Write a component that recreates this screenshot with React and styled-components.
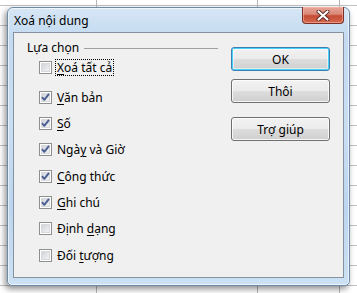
import React from 'react'
import styled, { createGlobalStyle } from 'styled-components'

const GlobalStyle = createGlobalStyle`
  html, body {
    margin: 0;
    padding: 0;
  }
  body {
    width: 357px;
    height: 293px;
    overflow: hidden;
    font-family: 'Noto Sans', 'Open Sans', sans-serif;
    background-color: #ffffff;
    background-image:
      linear-gradient(to right, transparent 96px, #b8b8b8 96px, #b8b8b8 97px, transparent 97px),
      linear-gradient(to right, transparent 257px, #b8b8b8 257px, #b8b8b8 258px, transparent 258px),
      linear-gradient(to right, transparent 339px, #b8b8b8 339px, #b8b8b8 340px, transparent 340px),
      repeating-linear-gradient(to bottom, transparent 0, transparent 5px, #c2c2c2 5px, #c2c2c2 6px, transparent 6px, transparent 20px);
  }
`

const Desktop = styled.div`
  padding: 7px 7px 7px 7px;
`

const Window = styled.div`
  width: 343px;
  height: 279px;
  box-sizing: border-box;
  border: 1px solid #6e8aa4;
  border-radius: 6px 6px 5px 5px;
  background: linear-gradient(
    to bottom,
    #d6e6f5 0px,
    #c3daf0 30px,
    #c9def3 120px,
    #bcd5ee 200px,
    #cde1f4 279px
  );
  box-shadow: -2px 3px 6px rgba(0, 0, 0, 0.45), inset 0 0 0 1px rgba(255, 255, 255, 0.6);
  display: flex;
  flex-direction: column;
  padding: 0 5px 7px 5px;
`

const TitleBar = styled.div`
  height: 24px;
  display: flex;
  align-items: flex-start;
  justify-content: space-between;
`

const Title = styled.div`
  font-size: 12px;
  line-height: 16px;
  color: #000;
  padding: 5px 0 0 1px;
`

const CloseButton = styled.div`
  width: 42px;
  height: 17px;
  margin-top: -1px;
  margin-right: 0px;
  box-sizing: border-box;
  border: 1px solid #7a3027;
  border-top: none;
  border-radius: 0 0 4px 4px;
  background: linear-gradient(to bottom, #e7a698 0%, #d98878 45%, #c44b35 55%, #d56a50 100%);
  box-shadow: inset 0 0 0 1px rgba(255, 190, 170, 0.55);
  display: flex;
  align-items: center;
  justify-content: center;
`

const Client = styled.div`
  flex: 1;
  background: #f0f0f0;
  border: 1px solid #8592a0;
  display: flex;
  padding: 8px 0 0 13px;
`

const Group = styled.div`
  width: 191px;
  display: flex;
  flex-direction: column;
`

const Legend = styled.div`
  display: flex;
  align-items: center;
  font-size: 12px;
  line-height: 14px;
  color: #000;
  margin-bottom: -1px;

  &::after {
    content: '';
    flex: 1;
    height: 1px;
    background: #a0a0a0;
    margin-left: 5px;
    margin-top: 1px;
  }
`

const Row = styled.div`
  height: ${p => (p.first ? '26px' : '26.33px')};
  margin-bottom: ${p => (p.first ? '4px' : '0')};
  display: flex;
  align-items: center;
  padding-left: 12px;
  font-size: 12px;
  color: #000;
`

const Box = styled.div`
  width: 13px;
  height: 13px;
  box-sizing: border-box;
  border: 1px solid #8e8f8f;
  background: #fff;
  padding: 1px;
  margin-right: 5px;
  flex-shrink: 0;
  position: relative;
`

const BoxInner = styled.div`
  width: 9px;
  height: 9px;
  background: linear-gradient(135deg, #cbcfd5 0%, #e3e5e8 55%, #f6f6f6 100%);
  box-shadow: inset 0 0 0 1px #d7d9dd;
`

const Check = styled.svg`
  position: absolute;
  left: 0;
  top: 0;
`

const Label = styled.span`
  line-height: 15px;
  padding: 0 1px;
  border: 1px dotted ${p => (p.focused ? '#000' : 'transparent')};
  margin-left: -2px;
`

const Key = styled.span`
  text-decoration: underline;
  text-underline-offset: 2px;
`

const Buttons = styled.div`
  display: flex;
  flex-direction: column;
  margin-left: 13px;
  padding-top: 6px;
`

const Button = styled.div`
  width: 99px;
  height: 24px;
  box-sizing: border-box;
  border: 1px solid ${p => (p.primary ? '#3c7fb1' : '#707070')};
  border-radius: 3px;
  margin-bottom: ${p => p.gap}px;
  background: linear-gradient(to bottom, #f2f2f2 0%, #ebebeb 48%, #dddddd 52%, #cfcfcf 100%);
  box-shadow: ${p =>
    p.primary
      ? 'inset 0 0 0 1px #48d2fb, inset 0 0 0 2px rgba(255,255,255,0.5)'
      : 'inset 0 0 0 1px rgba(255,255,255,0.8)'};
  display: flex;
  align-items: center;
  justify-content: center;
  font-size: 12px;
  color: #000;
`

const items = [
  { pre: '', key: 'X', post: 'oá tất cả', checked: false, focused: true, first: true },
  { pre: '', key: 'V', post: 'ăn bản', checked: true },
  { pre: '', key: 'S', post: 'ố', checked: true },
  { pre: 'Ngà', key: 'y', post: ' và Giờ', checked: true },
  { pre: '', key: 'C', post: 'ông thức', checked: true },
  { pre: '', key: 'G', post: 'hi chú', checked: true },
  { pre: 'Định ', key: 'd', post: 'ạng', checked: false },
  { pre: 'Đối ', key: 't', post: 'ượng', checked: false },
]

function CheckBox({ checked }) {
  return (
    <Box>
      <BoxInner />
      {checked && (
        <Check width="11" height="11" viewBox="0 0 11 11">
          <path
            d="M2 5.2 L4.3 7.8 L9 1.8"
            fill="none"
            stroke="#4a5e92"
            strokeWidth="1.9"
            strokeLinejoin="round"
          />
        </Check>
      )}
    </Box>
  )
}

export default function App() {
  return (
    <>
      <GlobalStyle />
      <Desktop>
        <Window>
          <TitleBar>
            <Title>Xoá nội dung</Title>
            <CloseButton>
              <svg width="14" height="11" viewBox="0 0 14 11">
                <path
                  d="M2.5 1.5 L11.5 9.5 M11.5 1.5 L2.5 9.5"
                  stroke="#5a2a24"
                  strokeWidth="4"
                  strokeLinecap="round"
                />
                <path
                  d="M2.5 1.5 L11.5 9.5 M11.5 1.5 L2.5 9.5"
                  stroke="#ffffff"
                  strokeWidth="2.2"
                  strokeLinecap="round"
                />
              </svg>
            </CloseButton>
          </TitleBar>
          <Client>
            <Group>
              <Legend>Lựa chọn</Legend>
              {items.map((it, i) => (
                <Row key={i} first={it.first}>
                  <CheckBox checked={it.checked} />
                  <Label focused={it.focused}>
                    {it.pre}
                    <Key>{it.key}</Key>
                    {it.post}
                  </Label>
                </Row>
              ))}
            </Group>
            <Buttons>
              <Button primary gap={8}>OK</Button>
              <Button gap={14}>Thôi</Button>
              <Button gap={0}>
                <span>
                  Trợ <Key>g</Key>iúp
                </span>
              </Button>
            </Buttons>
          </Client>
        </Window>
      </Desktop>
    </>
  )
}
